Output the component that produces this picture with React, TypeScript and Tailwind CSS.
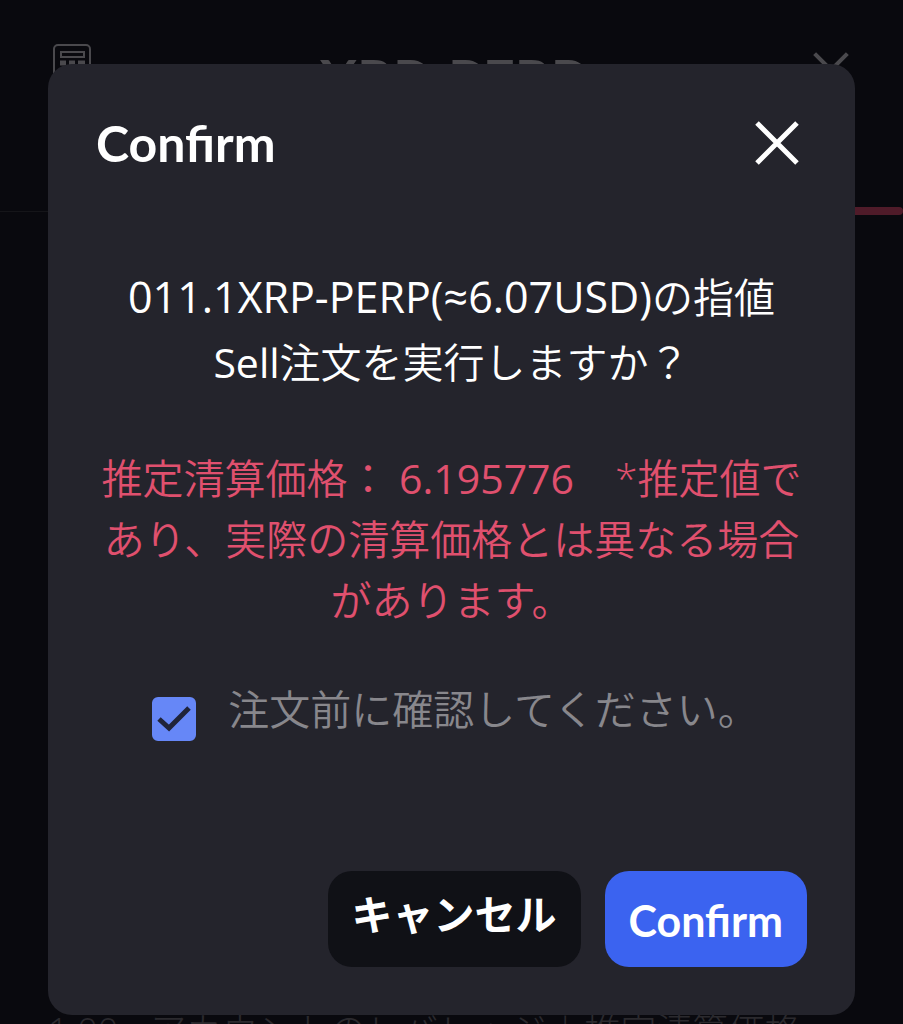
import { useState } from 'react';

const CloseIcon = ({ className }: { className?: string }) => (
  <svg className={className} viewBox="0 0 44 44" fill="none" stroke="currentColor" strokeWidth="5" aria-hidden="true">
    <path d="M2 2L42 42M42 2L2 42" />
  </svg>
);

const CalculatorIcon = ({ className }: { className?: string }) => (
  <svg className={className} viewBox="0 0 40 48" fill="none" stroke="currentColor" strokeWidth="2" aria-hidden="true">
    <rect x="2" y="1" width="36" height="46" rx="4" />
    <rect x="9" y="8" width="23" height="5" strokeWidth="2" />
    <path d="M8 19h6M17 19h6M26 19h7M8 27h6M17 27h6M26 27h7M8 35h6M17 35h6M26 35h7" strokeWidth="5" />
  </svg>
);

const OrderPage = () => (
  <div className="flex h-screen flex-col overflow-hidden" aria-hidden="true">
    <header className="flex items-start justify-between px-[52px] pt-11 text-[#4a494d]">
      <CalculatorIcon className="h-12 w-10" />
      <h1 className="font-['Lato',sans-serif] text-[56px] leading-[70px] font-bold">XRP-PERP</h1>
      <CloseIcon className="mt-2 mr-[2px] h-9 w-9" />
    </header>
    <div className="mt-[93px] flex h-2 items-center">
      <div className="h-px flex-1 bg-[#151519]" />
      <div className="h-2 flex-1 rounded-full bg-[#4f1b29]" />
    </div>
    <p className="mt-auto -mb-7 flex gap-8 px-12 text-[36px] leading-[42px] font-light whitespace-nowrap text-[#2b2a2e]">
      <span>1.00</span>
      <span>アカウントのレバレッジ | 推定清算価格</span>
    </p>
  </div>
);

interface ConfirmDialogProps {
  onClose: () => void;
}

const ConfirmDialog = ({ onClose }: ConfirmDialogProps) => {
  const [checked, setChecked] = useState(true);

  return (
    <div className="absolute inset-0 px-12 pt-16">
      <div
        role="dialog"
        aria-modal="true"
        aria-labelledby="confirm-title"
        className="rounded-3xl bg-[#24242c] px-12 pt-12 pb-12 text-white"
      >
        <div className="flex items-center justify-between">
          <h2 id="confirm-title" className="font-['Lato',sans-serif] text-[50px] leading-[62px] font-bold">
            Confirm
          </h2>
          <button type="button" onClick={onClose} aria-label="Close" className="mr-2">
            <CloseIcon className="h-11 w-11" />
          </button>
        </div>

        <p className="mt-[90px] text-center text-[41px] leading-[65px] font-[350] whitespace-nowrap">
          <span className="text-[43px] font-normal">011.1XRP-PERP(≈6.07USD)</span>の指値
          <br />
          <span className="font-normal">Sell</span>注文を実行しますか？
        </p>

        <p className="mt-[53px] text-center text-[41px] leading-[61px] font-[350] whitespace-nowrap text-[#e0506e]">
          推定清算価格： <span className="font-normal">6.195776</span>　*推定値で
          <br />
          あり、実際の清算価格とは異なる場合
          <br />
          があります。
        </p>

        <div className="mt-12 flex items-start justify-center gap-8 pl-2">
          <div className="mt-[18px] grid h-11 w-11">
            <input
              id="check-order"
              type="checkbox"
              checked={checked}
              onChange={(e) => setChecked(e.target.checked)}
              className="col-start-1 row-start-1 h-11 w-11 appearance-none rounded-md border-2 border-[#6687f7] checked:bg-[#6687f7]"
            />
            {checked && (
              <svg
                className="pointer-events-none col-start-1 row-start-1 h-11 w-11"
                viewBox="0 0 44 44"
                fill="none"
                stroke="#20243a"
                strokeWidth="5"
                aria-hidden="true"
              >
                <path d="M7 22L17 31L37 11" />
              </svg>
            )}
          </div>
          <label htmlFor="check-order" className="text-[41px] leading-[61px] font-[350] text-[#88878c]">
            注文前に確認してください。
          </label>
        </div>

        <div className="mt-[130px] flex justify-end gap-6 font-bold">
          <button type="button" onClick={onClose} className="h-24 rounded-3xl bg-[#101116] px-6 pb-2 text-[41px]">
            キャンセル
          </button>
          <button
            type="button"
            onClick={onClose}
            className="h-24 rounded-3xl bg-[#3b63f0] px-6 pt-1 font-['Lato',sans-serif] text-[43px]"
          >
            Confirm
          </button>
        </div>
      </div>
    </div>
  );
};

export default function App() {
  const [open, setOpen] = useState(true);

  return (
    <main className="relative min-h-screen overflow-hidden bg-[#09090e] font-['Open_Sans','Noto_Sans_CJK_JP',sans-serif]">
      <OrderPage />
      {open && <ConfirmDialog onClose={() => setOpen(false)} />}
    </main>
  );
}
